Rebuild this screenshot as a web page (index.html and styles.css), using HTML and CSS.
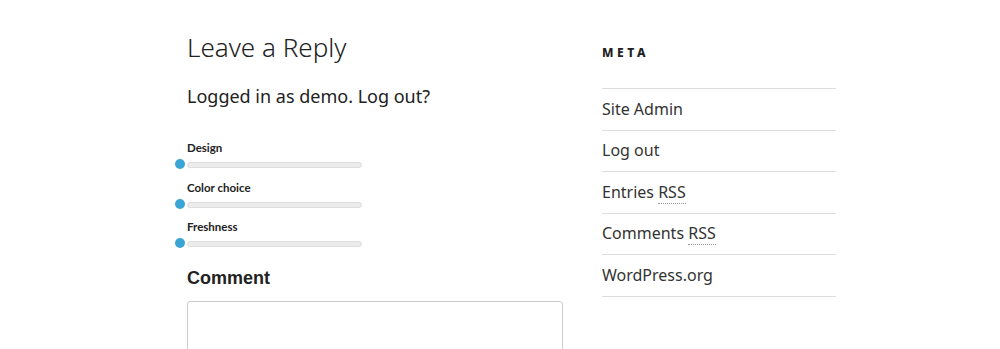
FILE: index.html
```html
<!DOCTYPE html>
<html lang="en">
<head>
    <meta charset="UTF-8">
    <title>Leave a Reply</title>
    <link rel="stylesheet" href="styles.css">
</head>
<body>

<div class="page">
    <div class="comments">
        <h3 class="reply-title">Leave a Reply</h3>
        <p class="logged-in">Logged in as demo. Log out?</p>

        <div class="rating">
            <label>Design</label>
            <div class="track"><span class="thumb"></span></div>
        </div>
        <div class="rating">
            <label>Color choice</label>
            <div class="track"><span class="thumb"></span></div>
        </div>
        <div class="rating">
            <label>Freshness</label>
            <div class="track"><span class="thumb"></span></div>
        </div>

        <h4 class="comment-label">Comment</h4>
        <textarea class="comment-box"></textarea>
    </div>

    <div class="sidebar">
        <h2 class="widget-title">Meta</h2>
        <ul class="meta-list">
            <li>Site Admin</li>
            <li>Log out</li>
            <li>Entries <abbr>RSS</abbr></li>
            <li>Comments <abbr>RSS</abbr></li>
            <li>WordPress.org</li>
        </ul>
    </div>
</div>

</body>
</html>
```

FILE: styles.css
```css
body {
    margin: 0;
    padding: 0;
    background: #fff;
    color: #333;
    font-family: "Noto Sans", "Liberation Sans", sans-serif;
    overflow: hidden;
}
.page {
    display: flex;
    padding-top: 31px;
    padding-left: 187px;
}
.comments {
    width: 376px;
}
.reply-title {
    margin: 0;
    font-size: 26px;
    font-weight: 300;
    line-height: 32px;
    color: #222;
}
.logged-in {
    margin: 20px 0 0;
    font-size: 18px;
    line-height: 26px;
    color: #222;
}
.rating {
    margin-top: 12.5px;
    width: 175px;
}
.rating:first-of-type {
    margin-top: 32px;
}
.rating label {
    display: block;
    font-family: Lato, "Liberation Sans", sans-serif;
    font-size: 11.5px;
    font-weight: bold;
    color: #222;
    line-height: 14px;
}
.track {
    position: relative;
    margin-top: 7px;
    height: 4px;
    background: #ececec;
    border: 1px solid #ddd;
    border-radius: 3px;
}
.thumb {
    position: absolute;
    left: -13px;
    top: -4px;
    width: 10px;
    height: 10px;
    border-radius: 50%;
    background: #3aa5d5;
}
.comment-label {
    margin: 18.5px 0 0;
    font-family: "Liberation Sans", Arial, sans-serif;
    font-size: 18px;
    font-weight: bold;
    color: #222;
    line-height: 24px;
}
.comment-box {
    display: block;
    margin-top: 11px;
    width: 376px;
    height: 80px;
    box-sizing: border-box;
    border: 1px solid #ccc;
    border-radius: 3px;
    resize: none;
}
.sidebar {
    margin-left: 39px;
    width: 234px;
}
.widget-title {
    margin: 15px 0 0;
    font-size: 12px;
    font-weight: 800;
    letter-spacing: 3.6px;
    text-transform: uppercase;
    color: #222;
    line-height: 14px;
}
.meta-list {
    list-style: none;
    margin: 28px 0 0;
    padding: 0;
    border-top: 1px solid #ddd;
}
.meta-list li {
    font-size: 16px;
    line-height: 24px;
    padding: 7.6px 0 9px;
    border-bottom: 1px solid #ddd;
    color: #333;
}
abbr {
    text-decoration: none;
    border-bottom: 1px dotted #999;
}
```
